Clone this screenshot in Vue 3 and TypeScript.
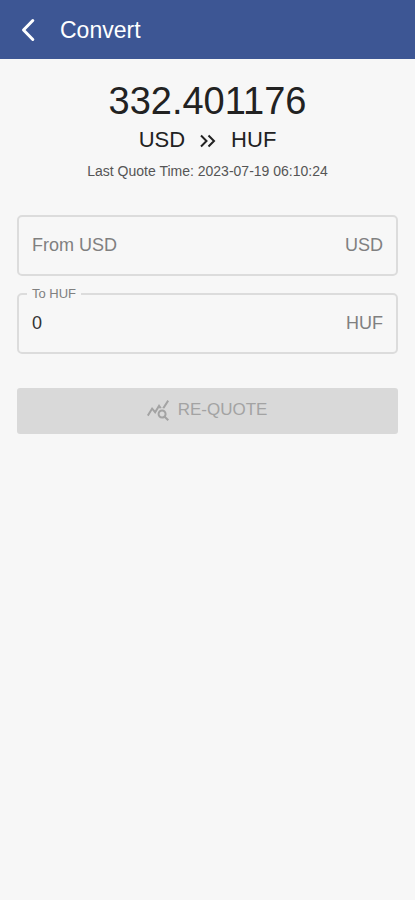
<script setup lang="ts">
import { ref } from 'vue'

const rate = '332.401176'
const source = 'USD'
const target = 'HUF'
const quotedAt = '2023-07-19 06:10:24'
const fromAmount = ref('')
const toAmount = ref('0')
</script>

<template>
  <div class="screen">
    <header class="bar">
      <button class="back" type="button" aria-label="Back">
        <svg width="16" height="26" viewBox="0 0 16 26" fill="none" stroke="currentColor" stroke-width="3" stroke-linecap="round" stroke-linejoin="round">
          <path d="M12.8 3.5 3.5 13 12.8 22.5" />
        </svg>
      </button>
      <h1 class="title">Convert</h1>
    </header>

    <main class="content">
      <section class="quote">
        <p class="rate">{{ rate }}</p>
        <p class="pair">
          <span>{{ source }}</span>
          <svg width="18" height="16" viewBox="0 0 18 16" fill="none" stroke="currentColor" stroke-width="2" aria-hidden="true">
            <path d="M2 3.5 7.5 9 2 14.5M9.5 3.5 15 9 9.5 14.5" />
          </svg>
          <span>{{ target }}</span>
        </p>
        <p class="time">Last Quote Time: {{ quotedAt }}</p>
      </section>

      <form class="form" @submit.prevent>
        <div class="field">
          <label for="from">From {{ source }}</label>
          <input id="from" v-model="fromAmount" type="text" inputmode="decimal" />
          <span class="unit">{{ source }}</span>
        </div>

        <fieldset class="field outlined">
          <legend><label for="to">To {{ target }}</label></legend>
          <div class="row">
            <input id="to" v-model="toAmount" type="text" inputmode="decimal" />
            <span class="unit">{{ target }}</span>
          </div>
        </fieldset>

        <button class="requote" type="submit" disabled>
          <svg width="24" height="24" viewBox="0 0 24 24" fill="currentColor" aria-hidden="true">
            <path d="M19.88 18.47c.44-.7.7-1.51.7-2.39 0-2.49-2.01-4.5-4.5-4.5s-4.5 2.01-4.5 4.5 2.01 4.5 4.49 4.5c.88 0 1.7-.26 2.39-.7L21.58 23 23 21.58l-3.12-3.11zm-3.8.11c-1.38 0-2.5-1.12-2.5-2.5s1.12-2.5 2.5-2.5 2.5 1.12 2.5 2.5-1.12 2.5-2.5 2.5zm-.36-8.5c-.74.02-1.45.18-2.1.45l-.55-.83-3.8 6.18-3.01-3.52-3.63 5.81L1 17l5-8 3 3.5L13 6l2.72 4.08zm2.59.5c-.64-.28-1.33-.45-2.05-.49L21.38 2 23 3.18l-4.69 7.4z" />
          </svg>
          <span>RE-QUOTE</span>
        </button>
      </form>
    </main>
  </div>
</template>

<style>
body {
  background: #f7f7f7;
}
</style>

<style scoped>
.screen {
  font-family: "Liberation Sans", Arial, sans-serif;
  color: #222;
}
.bar {
  display: flex;
  align-items: center;
  gap: 24px;
  padding: 0 20px;
  height: 59px;
  background: #3d5694;
  color: #fff;
}
.back {
  display: flex;
  padding: 0;
  border: 0;
  background: none;
  color: inherit;
}
.title {
  margin: 0;
  font-size: 23px;
  line-height: 28px;
  font-weight: 400;
}
.content {
  padding: 20px 17px;
}
.quote {
  text-align: center;
}
.quote p {
  margin: 0;
}
.rate {
  font-size: 38px;
  line-height: 44px;
}
.quote .pair {
  display: flex;
  justify-content: center;
  align-items: center;
  gap: 14px;
  font-size: 22px;
  line-height: 34px;
}
.time {
  font-size: 14px;
  line-height: 28px;
  color: #555;
}
.form {
  display: flex;
  flex-direction: column;
  margin-top: 30px;
}
.field {
  box-sizing: border-box;
  border: 2px solid #dcdcdc;
  border-radius: 5px;
  padding: 0 13px;
  font-size: 18px;
  color: #808080;
}
.field:not(.outlined) {
  display: flex;
  align-items: center;
  height: 61px;
}
.outlined {
  margin: 10px 0 0;
  min-width: 0;
  padding: 0 13px 0 8px;
}
legend {
  padding: 0 5px;
  font-size: 13px;
  line-height: 16px;
}
.row {
  display: flex;
  align-items: center;
  height: 42px;
  padding: 0 0 8px 5px;
}
input {
  flex: 1;
  min-width: 0;
  padding: 0;
  border: 0;
  outline: 0;
  background: none;
  font: inherit;
  color: #333;
}
.requote {
  display: flex;
  justify-content: center;
  align-items: center;
  gap: 8px;
  height: 46px;
  margin-top: 34px;
  padding: 0 2px 2px 0;
  border: 0;
  border-radius: 3px;
  background: #d9d9d9;
  color: #a3a3a3;
  font-family: inherit;
  font-size: 17px;
}
</style>
